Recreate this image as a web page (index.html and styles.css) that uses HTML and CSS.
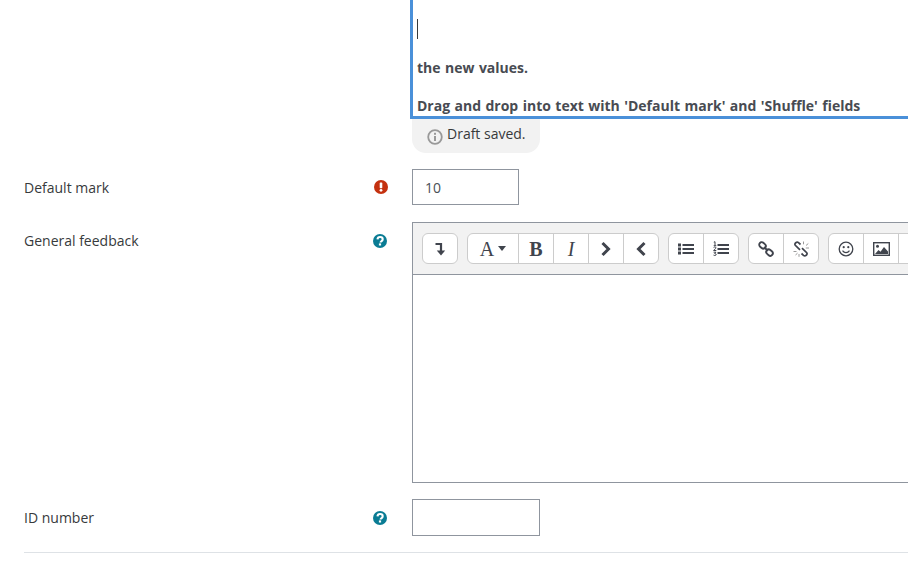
FILE: index.html
```html
<!DOCTYPE html>
<html lang="en">
<head>
<meta charset="utf-8">
<title>Question form</title>
<link rel="stylesheet" href="styles.css">
</head>
<body>
<main class="form">
  <div class="control-col">
    <div class="editor-focus">
      <span class="caret"></span>
      <p class="line first">the new values.</p>
      <p class="line">Drag and drop into text with 'Default mark' and 'Shuffle' fields</p>
    </div>
    <div class="draft">
      <svg class="draft-icon" viewBox="0 0 16 16"><circle cx="8" cy="8" r="6.8" fill="none" stroke="#999" stroke-width="1.8"/><rect x="7" y="7" width="2" height="5" fill="#999"/><rect x="7" y="3.800" width="2" height="2" fill="#999"/></svg>
      <span>Draft saved.</span>
    </div>
  </div>

  <div class="row row-mark">
    <label class="label">Default mark</label>
    <span class="help">
      <svg viewBox="0 0 14 14"><circle cx="7" cy="7" r="7" fill="#c4310f"/><rect x="5.700" y="2.600" width="2.600" height="5.600" rx=".8" fill="#fff"/><circle cx="7" cy="10.300" r="1.400" fill="#fff"/></svg>
    </span>
    <input class="input input-mark" type="text" value="10">
  </div>

  <div class="row row-feedback">
    <label class="label">General feedback</label>
    <span class="help help-q">
      <svg viewBox="0 0 14 14"><circle cx="7" cy="7" r="7" fill="#0a7c94"/><path d="M4.500 5.400C4.600 3.800 5.700 3 7.100 3c1.500 0 2.600.9 2.600 2.200 0 1-.6 1.600-1.400 2.100-.5.3-.7.6-.7 1.300" fill="none" stroke="#fff" stroke-width="2.100"/><rect x="5.900" y="9.400" width="2.200" height="2.100" fill="#fff"/></svg>
    </span>
    <div class="editor">
      <div class="toolbar">
        <div class="group">
          <button class="btn" type="button"><svg viewBox="0 0 14 14" class="ic"><path d="M2.500 2h5.500v8" fill="none" stroke="#40444d" stroke-width="2.200"/><path d="M3.800 8.500h8.400L8 13.500z" fill="#40444d"/></svg></button>
        </div>
        <div class="group">
          <button class="btn btn-style" type="button"><span class="serif big">A</span><span class="caret-down"></span></button>
          <button class="btn" type="button"><span class="serif bold">B</span></button>
          <button class="btn" type="button"><span class="serif italic">I</span></button>
          <button class="btn" type="button"><svg viewBox="0 0 16 16" class="ic-l"><path d="M4.500 2l6 6-6 6" fill="none" stroke="#40444d" stroke-width="3"/></svg></button>
          <button class="btn" type="button"><svg viewBox="0 0 16 16" class="ic-l"><path d="M11.500 2l-6 6 6 6" fill="none" stroke="#40444d" stroke-width="3"/></svg></button>
        </div>
        <div class="group">
          <button class="btn" type="button"><svg viewBox="0 0 16 14" class="ic-w"><g fill="#40444d"><rect x="0" y="1.500" width="3" height="3"/><rect x="0" y="5.500" width="3" height="3"/><rect x="0" y="9.500" width="3" height="3"/><rect x="4.500" y="2" width="11.500" height="2"/><rect x="4.500" y="6" width="11.500" height="2"/><rect x="4.500" y="10" width="11.500" height="2"/></g></svg></button>
          <button class="btn" type="button"><svg viewBox="0 0 16 16" class="ic-l"><g fill="none" stroke="#40444d" stroke-width="1"><path d="M.8 1.200L2 .7v4M.7 4.700h2.600"/><path d="M.6 6.500c.6-.8 2.400-.7 2.400.4 0 .9-2.300 1.700-2.400 2.600h2.700"/><path d="M.6 11.200h2.300L1.700 12.600c1 0 1.500.4 1.500 1 0 1-2 1.100-2.700.5"/></g><g fill="#40444d"><rect x="4.500" y="3" width="11.500" height="2"/><rect x="4.500" y="7" width="11.500" height="2"/><rect x="4.500" y="11" width="11.500" height="2"/></g></svg></button>
        </div>
        <div class="group">
          <button class="btn" type="button"><svg viewBox="0 0 16 16" class="ic-l"><g fill="none" stroke="#40444d" stroke-width="1.900"><rect x="1" y="1.900" width="7" height="5" rx="2.500" transform="rotate(40 4.500 4.400)"/><rect x="8" y="9.100" width="7" height="5" rx="2.500" transform="rotate(40 11.500 11.600)"/><path d="M6 6.200l4 3.600"/></g></svg></button>
          <button class="btn" type="button"><svg viewBox="0 0 16 16" class="ic-l"><g fill="none" stroke="#40444d" stroke-width="1.700"><path d="M7.500 3.500L5.500 1.700C3.800.3 1 2.400 2.300 4.300L7 8.800"/><path d="M9 7.200l4.700 4.500c1.300 1.900-1.500 4-3.200 2.600l-2-1.800"/></g><path d="M10.500.5v2.800M13 4.500l2.300-2M12.800 7H16M.5 10.500h3M2.500 14l2-1.800M6 15.800V13" stroke="#9a9a9a" stroke-width="1" fill="none"/></svg></button>
        </div>
        <div class="group">
          <button class="btn" type="button"><svg viewBox="0 0 16 16" class="ic-l"><circle cx="8" cy="8" r="6.800" fill="none" stroke="#40444d" stroke-width="1.300"/><circle cx="5.700" cy="6.200" r="1.100" fill="#40444d"/><circle cx="10.300" cy="6.200" r="1.100" fill="#40444d"/><path d="M4.500 9.700c1.800 2.600 5.200 2.600 7 0" fill="none" stroke="#40444d" stroke-width="1.200"/></svg></button>
          <button class="btn" type="button"><svg viewBox="0 0 17 14" class="ic-img"><rect x=".7" y=".7" width="15.600" height="12.600" fill="none" stroke="#40444d" stroke-width="1.400"/><circle cx="4.500" cy="4.200" r="1.500" fill="#40444d"/><path d="M2 12l3.500-4 2 1.800L11 5l4 4.500V12z" fill="#40444d"/></svg></button>
          <button class="btn" type="button"></button>
        </div>
      </div>
      <div class="editor-body"></div>
    </div>
  </div>

  <div class="row row-id">
    <label class="label">ID number</label>
    <span class="help help-q">
      <svg viewBox="0 0 14 14"><circle cx="7" cy="7" r="7" fill="#0a7c94"/><path d="M4.500 5.400C4.600 3.800 5.700 3 7.100 3c1.500 0 2.600.9 2.600 2.200 0 1-.6 1.600-1.400 2.100-.5.3-.7.6-.7 1.300" fill="none" stroke="#fff" stroke-width="2.100"/><rect x="5.900" y="9.400" width="2.200" height="2.100" fill="#fff"/></svg>
    </span>
    <input class="input input-id" type="text">
  </div>

  <hr class="rule">
</main>
</body>
</html>
```
FILE: styles.css
```css
* { box-sizing: border-box; }
html, body { margin: 0; height: 100%; overflow: hidden; background: #fff; }
body { font-family: "Open Sans", "Noto Sans", sans-serif; font-size: 14px; color: #373a3c; }
.form { width: 908px; height: 562px; overflow: hidden; }

.control-col { margin-left: 410px; }
.editor-focus {
  height: 119px;
  width: 498px;
  border-left: 3px solid #4a90d9;
  border-bottom: 3px solid #4a90d9;
  padding: 19px 0 0 4px;
  font-weight: 700;
  color: #484b52;
  font-size: 14px;
  word-spacing: 0.8px;
}
.caret { display: block; width: 1px; height: 20px; background: #373a3c; }
.line { margin: 0; line-height: 20px; white-space: nowrap; }
.line.first { margin: 19px 0 18px; }

.draft {
  margin-left: 2px;
  width: 128px;
  height: 34px;
  background: #f2f2f2;
  border-radius: 0 0 14px 14px;
  padding: 5px 0 0 15px;
  display: flex;
  align-items: flex-start;
  gap: 4px;
  line-height: 20px;
  font-size: 14px;
}
.draft-icon { width: 16px; height: 16px; margin-top: 5px; }

.row {
  display: grid;
  grid-template-columns: 342px 46px 1fr;
  padding-left: 24px;
  align-items: start;
}
.row-mark { margin-top: 16px; height: 36px; }
.row-feedback { margin-top: 17px; height: 261px; }
.row-id { margin-top: 16px; height: 37px; }
.label { line-height: 20px; padding-top: 9px; font-size: 14px; }
.help { display: block; padding: 11px 0 0 8px; line-height: 0; }
.help-q { padding: 12px 0 0 7px; }
.help svg { width: 14px; height: 14px; }

.input {
  display: block;
  border: 1px solid #8f959e;
  background: #fff;
  height: 100%;
  padding: 0 12px;
  font: 14px "Open Sans", "Noto Sans", sans-serif;
  color: #495057;
  outline: 0;
  border-radius: 0;
}
.input-mark { width: 107px; }
.input-id { width: 128px; }

.editor {
  height: 261px;
  width: 520px;
  border: 1px solid #8f959e;
  border-right: 0;
  display: flex;
  flex-direction: column;
}
.toolbar {
  height: 52px;
  background: #f2f2f2;
  border-bottom: 1px solid #8f959e;
  display: flex;
  gap: 9px;
  padding: 10px 0 0 9px;
  align-items: flex-start;
  flex: none;
}
.group {
  display: flex;
  flex: none;
  height: 31px;
  background: #fff;
  border: 1px solid #ccc;
  border-radius: 6px;
}
.btn {
  flex: none;
  width: 35px;
  height: 29px;
  padding: 0;
  margin: 0;
  background: transparent;
  border: 0;
  border-left: 1px solid #ccc;
  display: flex;
  align-items: center;
  justify-content: center;
  color: #40444d;
}
.btn:first-child { border-left: 0; width: 34px; }
.btn-style.btn { width: 50px; gap: 4px; }
.ic { width: 14px; height: 14px; }
.ic-w { width: 16px; height: 14px; }
.ic-l { width: 16px; height: 16px; }
.ic-img { width: 17px; height: 14px; }
.serif { font-family: "Liberation Serif", serif; line-height: 1; }
.big { font-size: 20px; }
.bold { font-size: 20px; font-weight: 700; }
.italic { font-size: 20px; font-style: italic; }
.caret-down {
  width: 0;
  height: 0;
  border-left: 4.500px solid transparent;
  border-right: 4.500px solid transparent;
  border-top: 5px solid #40444d;
}
.editor-body { flex: 1; background: #fff; }

.rule {
  margin: 16px 0 0 24px;
  border: 0;
  border-top: 1px solid #dee2e6;
  height: 0;
}
```
